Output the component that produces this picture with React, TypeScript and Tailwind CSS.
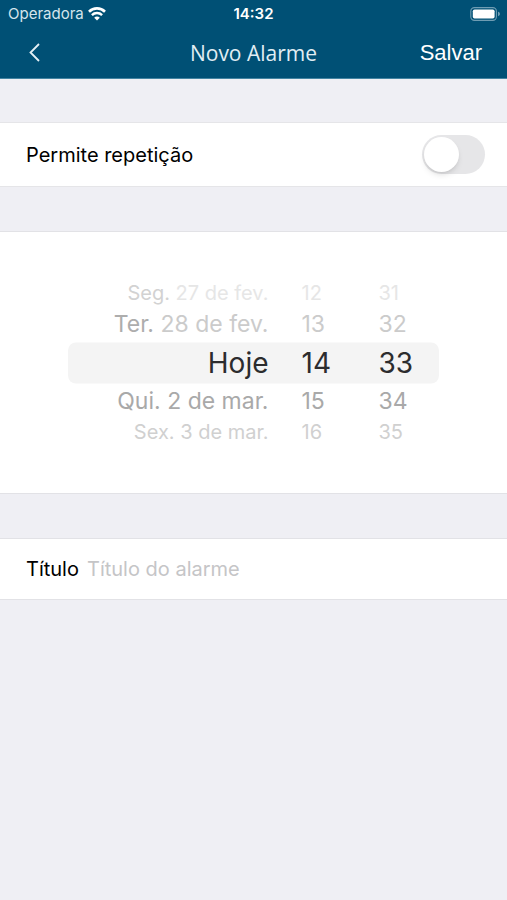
import { useState } from "react";
import clsx from "clsx";

type WheelItem = {
  strong?: string;
  label: string;
};

const DATES: WheelItem[] = [
  { strong: "Seg.", label: "27 de fev." },
  { strong: "Ter.", label: "28 de fev." },
  { label: "Hoje" },
  { label: "Qui. 2 de mar." },
  { label: "Sex. 3 de mar." },
];

const range = (count: number): WheelItem[] =>
  Array.from({ length: count }, (_, i) => ({
    label: String(i).padStart(2, "0"),
  }));

const HOURS = range(24);
const MINUTES = range(60);

// one entry per visible row, from two above the selection to two below
const ROWS = [
  { offset: -2, className: "h-[26px] text-xl text-[#e6e6e6]", strong: "text-[#d2d2d2]" },
  { offset: -1, className: "h-9 text-[23px] text-[#cbcbcb]", strong: "text-[#adadad]" },
  { offset: 0, className: "h-[41px] text-[28px] text-[#2c2c2e]", strong: "" },
  { offset: 1, className: "h-9 text-[23px] text-[#a9a9a9]", strong: "" },
  { offset: 2, className: "h-[26px] text-xl text-[#d0d0d0]", strong: "" },
];

function Wheel({
  name,
  items,
  initial,
  align = "start",
  className,
}: {
  name: string;
  items: WheelItem[];
  initial: number;
  align?: "start" | "end";
  className: string;
}) {
  const [selected, setSelected] = useState(initial);

  return (
    <div role="group" aria-label={name} className={clsx("flex flex-col", className)}>
      {ROWS.map((row) => {
        const index = selected + row.offset;
        const item = items[index];
        if (!item) {
          return <div key={row.offset} className={row.className} />;
        }
        return (
          <button
            key={row.offset}
            type="button"
            aria-pressed={row.offset === 0}
            onClick={() => setSelected(index)}
            className={clsx(
              "flex items-center leading-none whitespace-pre",
              align === "end" ? "justify-end" : "justify-start",
              row.className,
            )}
          >
            {item.strong && <span className={row.strong}>{item.strong} </span>}
            {item.label}
          </button>
        );
      })}
    </div>
  );
}

function WifiIcon() {
  return (
    <svg width="18" height="14" viewBox="0 0 18 14" fill="none" aria-hidden="true">
      <path d="M1 4.7a11.4 11.4 0 0 1 16 0" stroke="white" strokeWidth="2.6" />
      <path d="M3.9 8.1a7.2 7.2 0 0 1 10.2 0" stroke="white" strokeWidth="2.4" />
      <path d="M9 13.6 6.2 10.8a3.9 3.9 0 0 1 5.6 0z" fill="white" />
    </svg>
  );
}

function BatteryIcon() {
  return (
    <svg width="31" height="14" viewBox="0 0 31 14" fill="none" aria-hidden="true">
      <rect x="0.8" y="0.6" width="25.6" height="12.8" rx="3.6" stroke="#6f9db3" strokeWidth="1.1" />
      <rect x="2.8" y="2.4" width="21.8" height="9.2" rx="1.8" fill="white" />
      <path d="M28 4.8c2.6.6 2.6 3.8 0 4.4z" fill="#6f9db3" />
    </svg>
  );
}

function StatusBar() {
  return (
    <div className="grid h-7 grid-cols-3 items-center px-1.5 text-[15px]">
      <div className="flex items-center gap-1 pl-0.5 text-[#d5e5ec]">
        Operadora
        <WifiIcon />
      </div>
      <div className="text-center font-semibold">14:32</div>
      <div className="flex justify-end">
        <BatteryIcon />
      </div>
    </div>
  );
}

export default function App() {
  const [repeat, setRepeat] = useState(false);
  const [title, setTitle] = useState("");

  return (
    <div className="min-h-screen bg-[#efeff4] font-['Inter',sans-serif] text-black">
      <header className="border-b border-[#4384a2] bg-[#005075] text-white">
        <StatusBar />
        <div className="grid h-[50px] grid-cols-3 items-center px-[25px]">
          <button type="button" aria-label="Voltar" className="justify-self-start p-0.5">
            <svg width="14" height="20" viewBox="0 0 14 20" fill="none" aria-hidden="true">
              <path d="M12 1 3.5 9.5 12 18" stroke="#e4f0f5" strokeWidth="1.8" />
            </svg>
          </button>
          <h1 className="text-center font-['Open_Sans',sans-serif] text-[21px] leading-6 whitespace-nowrap text-[#e1eef4]">
            Novo Alarme
          </h1>
          <button
            type="button"
            className="justify-self-end font-['Liberation_Sans',sans-serif] text-[22px] leading-6"
          >
            Salvar
          </button>
        </div>
      </header>

      <main className="flex flex-col gap-11 pt-[43px]">
        <section className="flex h-[65px] items-center justify-between border-y border-[#e5e5e8] bg-white pr-[22px] pl-[26px]">
          <label htmlFor="repeat" className="text-xl">
            Permite repetição
          </label>
          <input
            id="repeat"
            type="checkbox"
            role="switch"
            checked={repeat}
            onChange={(e) => setRepeat(e.target.checked)}
            className="h-[39px] w-[63px] appearance-none rounded-full bg-[#e6e6e8] p-0.5 before:block before:size-[35px] before:rounded-full before:bg-white before:shadow-md checked:bg-green-500 checked:before:ml-6"
          />
        </section>

        <section className="border-y border-[#e2e2e6] bg-white px-[68px] py-12">
          <div className="relative isolate flex justify-center">
            <div className="absolute inset-x-0 top-1/2 -z-10 h-[41px] -translate-y-1/2 rounded-lg bg-[#f4f4f4]" />
            <Wheel name="Data" items={DATES} initial={2} align="end" className="w-44" />
            <Wheel name="Hora" items={HOURS} initial={14} className="ml-[33px] w-[77px]" />
            <Wheel name="Minuto" items={MINUTES} initial={33} className="w-9" />
          </div>
        </section>

        <section className="flex h-[62px] items-center gap-2 border-y border-[#e2e2e6] bg-white px-[26px]">
          <label htmlFor="title" className="text-xl">
            Título
          </label>
          <input
            id="title"
            type="text"
            value={title}
            onChange={(e) => setTitle(e.target.value)}
            placeholder="Título do alarme"
            className="min-w-0 flex-1 text-xl outline-none placeholder:text-[#c5c5c7]"
          />
        </section>
      </main>
    </div>
  );
}
